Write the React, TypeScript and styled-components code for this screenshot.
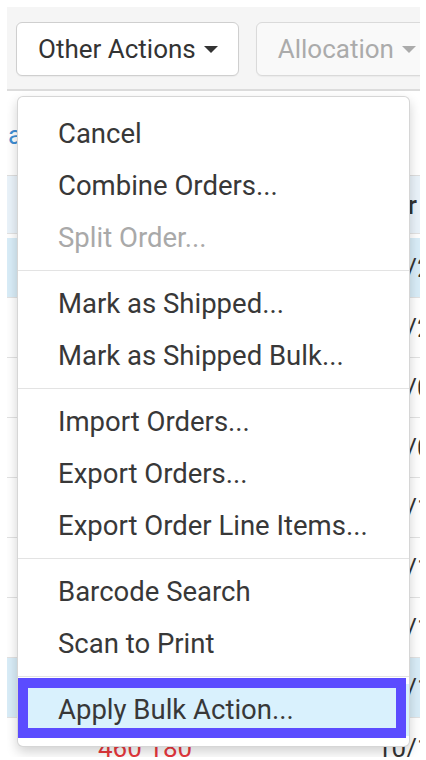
import styled, { createGlobalStyle } from "styled-components";

const GlobalStyle = createGlobalStyle`
  html, body {
    margin: 0;
    padding: 0;
    background: #fff;
  }
  body {
    font-family: Roboto, "Liberation Sans", Arial, sans-serif;
    color: #333;
  }
`;

const Page = styled.div`
  padding: 7px 6px 0 7px;
`;

const Frame = styled.div`
  position: relative;
  width: 413px;
  height: 750px;
  overflow: hidden;
  background: #fff;
`;

const Toolbar = styled.div`
  display: flex;
  gap: 17px;
  height: 67px;
  padding: 15px 0 0 9px;
  background: #f5f5f5;
  border-bottom: 2px solid #dcdcdc;
`;

const ToolButton = styled.button<{ $disabled?: boolean }>`
  flex-shrink: 0;
  display: flex;
  align-items: center;
  height: 54px;
  padding: 0 20px 0 21px;
  border: 1px solid ${(p) => (p.$disabled ? "#dadada" : "#cfcfcf")};
  border-radius: 6px;
  background: ${(p) => (p.$disabled ? "#f9f9f9" : "#fff")};
  color: ${(p) => (p.$disabled ? "#ababab" : "#333")};
  font-family: Roboto, "Liberation Sans", Arial, sans-serif;
  font-size: 26px;
  box-shadow: 0 1px 1px rgba(0, 0, 0, 0.04);
`;

const Caret = styled.span<{ $disabled?: boolean }>`
  display: inline-block;
  margin-left: 8px;
  border-top: 7px solid ${(p) => (p.$disabled ? "#ababab" : "#333")};
  border-left: 7px solid transparent;
  border-right: 7px solid transparent;
`;

const LinkRow = styled.div`
  display: flex;
  align-items: center;
  height: 84px;
  padding: 4px 0 0 1px;
  box-sizing: border-box;
`;

const Link = styled.a`
  color: #3f8ed3;
  font-size: 26px;
  text-decoration: none;
`;

const Grid = styled.div<{ $bg?: string }>`
  display: grid;
  grid-template-columns: 91px 282px minmax(0, 1fr);
  align-items: center;
  height: 59px;
  white-space: nowrap;
  font-size: 26px;
  background: ${(p) => p.$bg ?? "#fff"};
  border-bottom: 1px solid #e2e2e2;
`;

const HeaderRow = styled(Grid)`
  height: 57px;
  margin-bottom: 4px;
  border-top: 1px solid #dedede;
  font-weight: 500;
`;

const HeaderLabel = styled.span<{ $end?: boolean }>`
  display: flex;
  min-width: 0;
  justify-content: ${(p) => (p.$end ? "flex-end" : "flex-start")};
  padding-right: ${(p) => (p.$end ? "3px" : "0")};
`;

const OrderNo = styled.span<{ $red?: boolean }>`
  color: ${(p) => (p.$red ? "#e8383d" : "#3f8ed3")};
`;

const DateCell = styled.span`
  margin-left: -3px;
  color: #333;
`;

const Menu = styled.div`
  position: absolute;
  top: 89px;
  left: 10px;
  width: 391px;
  padding: 11px 0 10px;
  background: #fff;
  border: 1px solid rgba(0, 0, 0, 0.16);
  border-radius: 6px;
  box-shadow: 0 5px 12px rgba(0, 0, 0, 0.18);
`;

const Item = styled.div<{ $disabled?: boolean; $active?: boolean }>`
  position: relative;
  height: 52px;
  line-height: 52px;
  padding-left: 40px;
  font-size: 27.5px;
  white-space: nowrap;
  color: ${(p) => (p.$disabled ? "#a9a9a9" : "#383838")};
  background: ${(p) => (p.$active ? "#d9f1fd" : "transparent")};

  ${(p) =>
    p.$active &&
    `
    &::after {
      content: "";
      position: absolute;
      top: -6px;
      bottom: -2px;
      left: 0;
      right: 3px;
      border: 10px solid #5b4cff;
    }
  `}
`;

const Divider = styled.div`
  height: 1px;
  margin: 6px 0 7px;
  background: #e3e3e3;
`;

const rows = [
  { no: "460 201", date: "10/23/2019", selected: true },
  { no: "460 200", date: "10/22/2019" },
  { no: "460 199", date: "10/09/2019" },
  { no: "460 196", date: "10/08/2019" },
  { no: "460 192", date: "10/17/2019" },
  { no: "460 188", date: "10/16/2019" },
  { no: "460 185", date: "10/15/2019" },
  { no: "460 183", date: "10/14/2019", selected: true },
  { no: "460 180", date: "10/11/2019", red: true },
];

type MenuEntry = { label: string; disabled?: boolean; active?: boolean } | "divider";

const menu: MenuEntry[] = [
  { label: "Cancel" },
  { label: "Combine Orders..." },
  { label: "Split Order...", disabled: true },
  "divider",
  { label: "Mark as Shipped..." },
  { label: "Mark as Shipped Bulk..." },
  "divider",
  { label: "Import Orders..." },
  { label: "Export Orders..." },
  { label: "Export Order Line Items..." },
  "divider",
  { label: "Barcode Search" },
  { label: "Scan to Print" },
  "divider",
  { label: "Apply Bulk Action...", active: true },
];

export default function App() {
  return (
    <Page>
      <GlobalStyle />
      <Frame>
        <Toolbar>
          <ToolButton>
            Other Actions
            <Caret />
          </ToolButton>
          <ToolButton $disabled>
            Allocation
            <Caret $disabled />
          </ToolButton>
        </Toolbar>

        <LinkRow>
          <Link href="#">a</Link>
        </LinkRow>

        <HeaderRow $bg="#eaf3fa">
          <span />
          <HeaderLabel>Order #</HeaderLabel>
          <HeaderLabel $end>Order</HeaderLabel>
        </HeaderRow>

        {rows.map((r) => (
          <Grid key={r.no} $bg={r.selected ? "#d9edf8" : "#fff"}>
            <span />
            <OrderNo $red={r.red}>{r.no}</OrderNo>
            <DateCell>{r.date}</DateCell>
          </Grid>
        ))}

        <Menu>
          {menu.map((m, i) =>
            m === "divider" ? (
              <Divider key={i} />
            ) : (
              <Item key={i} $disabled={m.disabled} $active={m.active}>
                {m.label}
              </Item>
            )
          )}
        </Menu>
      </Frame>
    </Page>
  );
}
